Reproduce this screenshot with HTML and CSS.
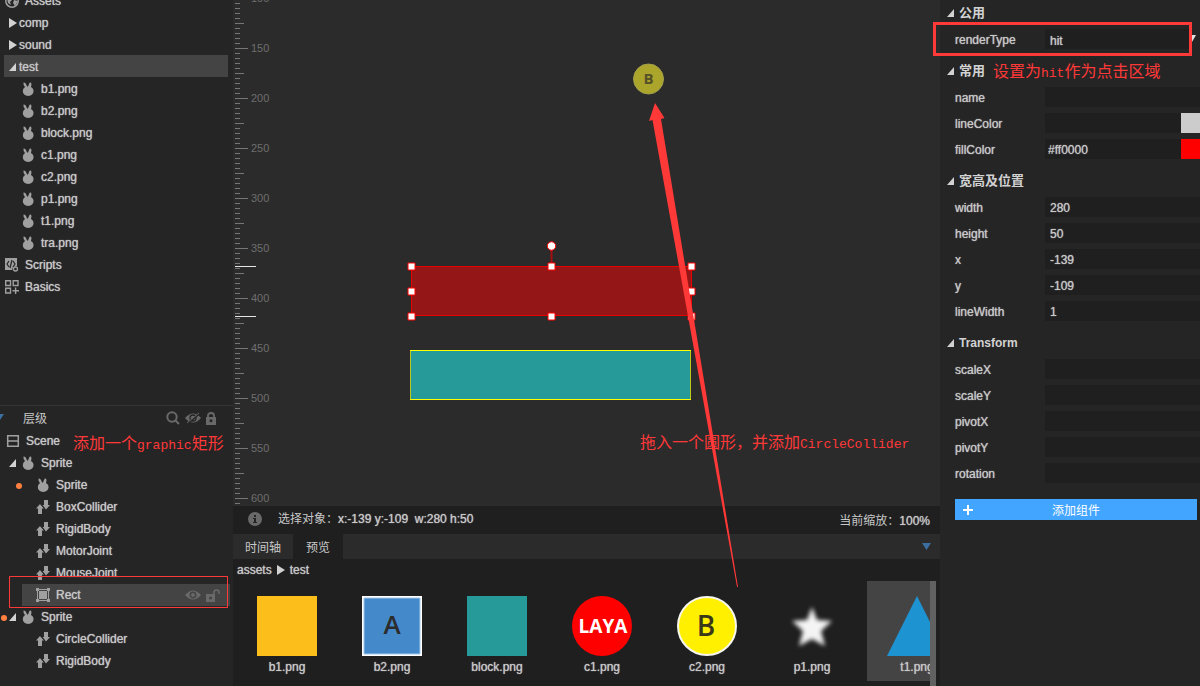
FILE: index.html
```html
<!DOCTYPE html>
<html lang="zh-CN">
<head>
<meta charset="utf-8">
<title>test</title>
<link rel="stylesheet" href="styles.css">
</head>
<body>
<svg class="defs" aria-hidden="true">
  <symbol id="bunny" viewBox="0 0 14 14"><path d="M2.500.500Q4 0 5 2L6 4.500H7L8 2Q8.800.300 10 .600 11 2 10 5Q12.700 6.700 12.600 9 12.300 13.800 7.200 13.900 2 13.800 1.800 9 1.800 6.500 4 5 2 2.500 2.500.500Z" fill="#a0a0a0"/></symbol>
  <symbol id="joint" viewBox="0 0 14 14"><path d="M4 4L8 8.500H6V14H2V8.500H0ZM8 0H12V5H14L10 9.500 6.500 5H8Z" fill="#a0a0a0"/><path d="M4 3L8.500 8.500" stroke="#252525"/></symbol>
  <symbol id="closed" viewBox="0 0 8 10"><path d="M0 0L8 5 0 10Z" fill="#d2d2d2"/></symbol>
  <symbol id="open" viewBox="0 0 8 10"><path d="M7 1V9H0Z" fill="#d2d2d2"/></symbol>
</svg>
<div class="app">
  <aside class="side">
    <section class="assets">
      <ul class="tree">
        <li class="row root"><svg class="ico" viewBox="0 0 14 14"><circle cx="7" cy="7" r="6.200" fill="none" stroke="#a0a0a0" stroke-width="1.500"/><path d="M2 4L7 2 8 5 5 8 6 11 3 9ZM9 6L13 7 10 12 8 9Z" fill="#a0a0a0"/></svg>Assets</li>
        <li class="row"><svg class="arrow"><use href="#closed"/></svg>comp</li>
        <li class="row"><svg class="arrow"><use href="#closed"/></svg>sound</li>
        <li class="row picked"><svg class="arrow"><use href="#open"/></svg>test</li>
        <li class="row file"><svg class="ico"><use href="#bunny"/></svg>b1.png</li>
        <li class="row file"><svg class="ico"><use href="#bunny"/></svg>b2.png</li>
        <li class="row file"><svg class="ico"><use href="#bunny"/></svg>block.png</li>
        <li class="row file"><svg class="ico"><use href="#bunny"/></svg>c1.png</li>
        <li class="row file"><svg class="ico"><use href="#bunny"/></svg>c2.png</li>
        <li class="row file"><svg class="ico"><use href="#bunny"/></svg>p1.png</li>
        <li class="row file"><svg class="ico"><use href="#bunny"/></svg>t1.png</li>
        <li class="row file"><svg class="ico"><use href="#bunny"/></svg>tra.png</li>
        <li class="row root"><svg class="ico" viewBox="0 0 14 14"><path d="M0 0H12V8L8 9 7 12H0Z" fill="#a0a0a0"/><path d="M4 3L2 6 4 9M8 3L10 6 8 9M7 2L5 10" fill="none" stroke="#252525" stroke-width="1.200"/><circle cx="10.500" cy="11" r="2" fill="none" stroke="#a0a0a0" stroke-width="1.300"/></svg>Scripts</li>
        <li class="row root"><svg class="ico" viewBox="0 0 14 14"><path d="M.700.700H5.500V5.500H.700ZM8.200.700H13V5.500H8.200ZM.700 8.200H5.500V13H.700ZM10.600 7.500V14M7.500 10.700H14" fill="none" stroke="#a0a0a0" stroke-width="1.400"/></svg>Basics</li>
      </ul>
    </section>
    <section class="layers">
      <header class="layers-head">
        <svg class="fold" viewBox="0 0 4 8"><path d="M0 0H4L0 6Z" fill="#3c6e9f"/></svg>
        <h2>层级</h2>
        <div class="tools">
          <button aria-label="搜索"><svg width="14" height="14" viewBox="0 0 14 14"><circle cx="6" cy="6" r="4.700" fill="none" stroke="#696969" stroke-width="2"/><path d="M9.500 9.500L13 13" stroke="#696969" stroke-width="2"/></svg></button>
          <button aria-label="隐藏"><svg width="16" height="12" viewBox="0 0 16 12"><path d="M0 6Q8-3 16 6 8 15 0 6Z" fill="#696969"/><circle cx="8" cy="6" r="3" fill="none" stroke="#252525" stroke-width="1.300"/><path d="M2 12L15 1" stroke="#252525" stroke-width="2"/><path d="M2 11L14 1" stroke="#696969"/></svg></button>
          <button aria-label="锁定"><svg width="10" height="13" viewBox="0 0 10 13"><path d="M2 6V3.500Q2 1 5 1 8 1 8 3.500V6" fill="none" stroke="#696969" stroke-width="1.800"/><path d="M0 5H10V13H0Z" fill="#696969"/><circle cx="5" cy="8.800" r="1.500" fill="#252525"/></svg></button>
        </div>
      </header>
      <ul class="tree">
        <li class="row scene"><svg class="ico" viewBox="0 0 14 14"><path d="M1.700 1.700H12.300V12.300H1.700ZM1.700 7H12.300" fill="none" stroke="#a0a0a0" stroke-width="1.500"/></svg>Scene</li>
        <li class="row sprite"><svg class="arrow"><use href="#open"/></svg><svg class="ico"><use href="#bunny"/></svg>Sprite</li>
        <li class="row child"><i class="dot inner"></i><svg class="ico"><use href="#bunny"/></svg>Sprite</li>
        <li class="row child"><svg class="ico"><use href="#joint"/></svg>BoxCollider</li>
        <li class="row child"><svg class="ico"><use href="#joint"/></svg>RigidBody</li>
        <li class="row child"><svg class="ico"><use href="#joint"/></svg>MotorJoint</li>
        <li class="row child"><svg class="ico"><use href="#joint"/></svg>MouseJoint</li>
        <li class="row rect"><svg class="ico" viewBox="0 0 14 14"><path d="M1.500 1.500H12.500V12.500H1.500Z" fill="none" stroke="#a0a0a0"/><path d="M0 0H3V3H0ZM11 0H14V3H11ZM0 11H3V14H0ZM11 11H14V14H11ZM3 3H11V11H3Z" fill="#a0a0a0"/></svg>Rect
          <span class="tools">
            <button aria-label="显示"><svg width="16" height="10" viewBox="0 0 16 10"><path d="M0 5Q8-4 16 5 8 14 0 5Z" fill="#696969"/><circle cx="8" cy="5" r="2.700" fill="#696969" stroke="#444" stroke-width="1.500"/></svg></button>
            <button aria-label="解锁"><svg width="14" height="13" viewBox="0 0 14 13"><path d="M8 6V3.500Q8 1 10.500 1 13 1 13 3.500V5" fill="none" stroke="#696969" stroke-width="1.500"/><path d="M0 5H9V13H0Z" fill="#696969"/><circle cx="4.500" cy="9" r="1.500" fill="#444"/></svg></button>
          </span></li>
        <li class="row sprite"><i class="dot outer"></i><svg class="arrow"><use href="#open"/></svg><svg class="ico"><use href="#bunny"/></svg>Sprite</li>
        <li class="row child"><svg class="ico"><use href="#joint"/></svg>CircleCollider</li>
        <li class="row child"><svg class="ico"><use href="#joint"/></svg>RigidBody</li>
      </ul>
    </section>
  </aside>

  <main class="main">
    <section class="stage">
      <svg class="ticks" aria-hidden="true">
        <defs><pattern id="scale" width="24" height="50" patternUnits="userSpaceOnUse">
          <path d="M0 3.500H5M0 8.500H5M0 13.500H5M0 18.500H5M0 23.500H9M0 28.500H5M0 33.500H5M0 38.500H5M0 43.500H5M0 48.500H13" stroke="#777"/>
        </pattern></defs>
        <rect width="24" height="100%" fill="url(#scale)"/>
        <path d="M0 266.500H21M0 316.500H21" stroke="#e4e8e4"/>
      </svg>
      <ol class="marks"><li>100</li><li>150</li><li>200</li><li>250</li><li>300</li><li>350</li><li>400</li><li>450</li><li>500</li><li>550</li><li>600</li></ol>
      <svg class="scene-art" width="707" height="506" viewBox="233 0 707 506">
        <circle cx="648.500" cy="79" r="15" fill="#aca52b" stroke="#a3a04b"/>
        <text x="648.500" y="84" class="ball">B</text>
        <rect x="411.500" y="266.500" width="280" height="49" fill="#951616" stroke="#e80000"/>
        <path d="M551.500 248V266" stroke="#a50e10" stroke-width="2"/>
        <circle cx="551.500" cy="246" r="4.200" fill="#fff" stroke="#f00"/>
        <path d="M408 263h7v7h-7zM548 263h7v7h-7zM688 263h7v7h-7zM408 288h7v7h-7zM688 288h7v7h-7zM408 313h7v7h-7zM548 313h7v7h-7zM688 313h7v7h-7z" fill="#fff" stroke="#f00"/>
        <rect x="410.500" y="350.500" width="280" height="49" fill="#269a99" stroke="#bcc719"/>
        <path d="M410 350.500H691M410 399.500H691" stroke="#ff0"/>
      </svg>
    </section>
    <div class="status">
      <svg width="14" height="14" viewBox="0 0 14 14"><circle cx="7" cy="7" r="7" fill="#696969"/><path d="M6 3H8V5H6ZM5 6H8V10H9V11H5V10H6V7H5Z" fill="#252525"/></svg>
      <span>选择对象：<b>x:-139 y:-109&nbsp; w:280 h:50</b></span>
      <span class="zoom">当前缩放：<b>100%</b></span>
    </div>
    <div class="tabs">
      <button>时间轴</button><button class="current">预览</button>
      <svg class="drop" width="10" height="8" viewBox="0 0 10 8"><path d="M0 0H9L4.500 7Z" fill="#3c6e9f"/></svg>
    </div>
    <section class="preview">
      <nav class="crumbs">assets<svg><use href="#closed"/></svg>test</nav>
      <div class="shelf">
        <div class="items">
          <figure><svg viewBox="0 0 60 60"><path d="M0 0H60V60H0Z" fill="#fcbe1a"/></svg><figcaption>b1.png</figcaption></figure>
          <figure><svg viewBox="0 0 60 60"><path d="M0 0H60V60H0Z" fill="#fff"/><path d="M2 2H58V58H2Z" fill="#4489ca" stroke="#a5c8e8"/><text x="30" y="38" class="letter">A</text></svg><figcaption>b2.png</figcaption></figure>
          <figure><svg viewBox="0 0 60 60"><path d="M0 0H60V60H0Z" fill="#269a99"/></svg><figcaption>block.png</figcaption></figure>
          <figure><svg viewBox="0 0 60 60"><circle cx="30" cy="30" r="30" fill="#f00"/><text x="31" y="37" class="laya">LAYA</text></svg><figcaption>c1.png</figcaption></figure>
          <figure><svg viewBox="0 0 60 60"><circle cx="30" cy="30" r="29" fill="#fff000" stroke="#f6f6ef" stroke-width="2"/><text x="29" y="40" class="letter big">B</text></svg><figcaption>c2.png</figcaption></figure>
          <figure><svg viewBox="0 0 60 60"><path class="soft" d="M30 11L35 24 50 25 39 35 43 50 30 43 17 50 21 35 10 25 25 24Z" fill="#f4f4f4"/></svg><figcaption>p1.png</figcaption></figure>
          <figure class="on"><svg viewBox="0 0 60 60"><path d="M30 0L60 60H0Z" fill="#1e93d2"/></svg><figcaption>t1.png</figcaption></figure>
        </div>
        <div class="thumb"></div>
      </div>
    </section>
  </main>

  <aside class="props">
    <form>
      <h3><svg><use href="#open"/></svg>公用</h3>
      <div class="field"><label for="renderType">renderType</label><select id="renderType"><option>hit</option></select><svg class="caret" viewBox="0 0 10 8"><path d="M0 0H6L2 7H0Z" fill="#e0e0e0"/></svg></div>
      <h3><svg><use href="#open"/></svg>常用</h3>
      <div class="field"><label for="name">name</label><input id="name"></div>
      <div class="field"><label for="lineColor">lineColor</label><input id="lineColor"><i class="swatch grey"></i></div>
      <div class="field"><label for="fillColor">fillColor</label><input id="fillColor" class="tight" value="#ff0000"><i class="swatch red"></i></div>
      <h3><svg><use href="#open"/></svg>宽高及位置</h3>
      <div class="field"><label for="width">width</label><input id="width" value="280"></div>
      <div class="field"><label for="height">height</label><input id="height" value="50"></div>
      <div class="field"><label for="x">x</label><input id="x" value="-139"></div>
      <div class="field"><label for="y">y</label><input id="y" value="-109"></div>
      <div class="field"><label for="lineWidth">lineWidth</label><input id="lineWidth" value="1"></div>
      <h3 class="latin"><svg><use href="#open"/></svg>Transform</h3>
      <div class="field"><label for="scaleX">scaleX</label><input id="scaleX"></div>
      <div class="field"><label for="scaleY">scaleY</label><input id="scaleY"></div>
      <div class="field"><label for="pivotX">pivotX</label><input id="pivotX"></div>
      <div class="field"><label for="pivotY">pivotY</label><input id="pivotY"></div>
      <div class="field"><label for="rotation">rotation</label><input id="rotation"></div>
      <button type="button" class="add"><svg width="10" height="10" viewBox="0 0 10 10"><path d="M5 0V10M0 5H10" stroke="#fff" stroke-width="2"/></svg><span>添加组件</span></button>
    </form>
  </aside>
</div>

<svg class="pointer" width="1200" height="686" aria-hidden="true"><path d="M655 103L664.500 118 661 119 738 587H737L652.500 120 649 121Z" fill="#ff3838"/></svg>
<div class="frame frame-rect"></div>
<div class="frame frame-type"></div>
<p class="note note-rect">添加一个<span>graphic</span>矩形</p>
<p class="note note-circle">拖入一个圆形，并添加<span>CircleCollider</span></p>
<p class="note note-hit">设置为<span>hit</span>作为点击区域</p>
</body>
</html>
```

FILE: styles.css
```css
* { box-sizing: border-box; }
body {
  margin: 0;
  overflow: hidden;
  background: #252525;
  color: #c8c8c8;
  font: 12px/22px "Liberation Sans", "Noto Sans CJK SC", sans-serif;
}
ul, ol, h2, h3, p, figure { margin: 0; padding: 0; list-style: none; font-size: 12px; font-weight: 400; }
button, input, select { border: 0; border-radius: 0; background: none; color: inherit; font: inherit; padding: 0; outline: 0; }
svg { display: block; flex: none; }
.defs { position: absolute; width: 0; height: 0; }

.app { display: grid; grid-template-columns: 233px 1fr 260px; height: 100vh; }
.row, .crumbs, figcaption, .field, .status b { text-shadow: 0 0 1px #c8c8c8; }

.side { display: flex; flex-direction: column; min-height: 0; }
.assets { flex: 1; overflow: hidden; border-bottom: 1px solid #333; }
.assets .tree { margin-top: -11px; }
.row { display: flex; align-items: center; height: 22px; margin: 0 5px 0 4px; padding-left: 5px; position: relative; }
.assets .row { padding-top: 2px; }
.arrow { width: 8px; height: 10px; margin-right: 2px; }
.ico { width: 14px; height: 14px; margin-right: 6px; }
.root { padding-left: 1px; }
.picked { background: #444; }
.file { padding-left: 17px; }
.scene { padding-left: 2px; }
.sprite .arrow { margin-right: 4px; }
.child { padding-left: 32px; }
.rect { margin: 0 3px 0 22px; padding-left: 14px; background: #444; }
.dot { position: absolute; width: 6px; height: 6px; border-radius: 50%; background: #ff7f41; top: 9px; }
.inner { left: 12px; }
.outer { left: -3px; }

.layers { padding-bottom: 14px; }
.layers-head { display: flex; align-items: center; height: 24px; }
.layers-head h2 { margin-left: 19px; padding-top: 2px; }
.fold { width: 4px; height: 8px; }
.tools { display: flex; align-items: center; gap: 5px; margin-left: auto; }
.layers-head .tools { margin-right: 17px; }
.rect .tools { margin-right: 10px; }

.main { display: flex; flex-direction: column; min-width: 0; min-height: 0; background: #1f1f1f; }
.stage { flex: 1; display: flex; position: relative; min-height: 0; overflow: hidden; background: #2b2b2b; padding-left: 2px; }
.ticks { position: absolute; width: 24px; height: 100%; }
.marks { margin: -27px 0 0 16px; color: #6e6e6e; font-size: 11px; }
.marks li { height: 50px; line-height: 50px; }
.scene-art { position: absolute; left: 0; top: 0; }
.ball { font: 700 15px "Open Sans", sans-serif; fill: #555129; text-anchor: middle; }
.status { display: flex; align-items: center; height: 28px; padding: 0 10px 2px 15px; gap: 16px; }
.status b { font-weight: 400; }
.zoom { margin-left: auto; padding-top: 3px; }
.tabs { display: flex; height: 25px; background: #2b2b2b; align-items: stretch; }
.tabs button { padding: 3px 12px 0; }
.tabs .current { padding: 3px 13px 0; background: #1f1f1f; }
.drop { margin: 9px 8px 0 auto; }
.preview { height: 127px; display: flex; flex-direction: column; }
.crumbs { display: flex; align-items: center; gap: 5px; padding-left: 4px; height: 22px; }
.crumbs svg { width: 8px; height: 10px; }
.shelf { display: flex; flex: 1; padding: 0 4px; }
.items { display: flex; flex: 1; gap: 5px; min-width: 0; overflow: hidden; }
.thumb { width: 6px; background: #616161; }
figure { flex: none; width: 100px; height: 100px; padding-top: 15px; text-align: center; }
figure svg { width: 60px; height: 60px; margin: 0 auto; }
.on { background: #444; }
.letter { font: 600 26px "Open Sans", sans-serif; fill: #2c2c2c; text-anchor: middle; }
.big { font-size: 28px; fill: #3a3818; }
.laya { font: 700 19px "Open Sans", sans-serif; fill: #fff; text-anchor: middle; }
.soft { filter: blur(2px); }

.props { overflow: hidden; padding-left: 7px; }
.props form { margin-top: -9px; }
h3 { display: flex; align-items: center; height: 38px; padding-top: 5px; gap: 4px; font-size: 13px; font-weight: 700; color: #d2d2d2; }
.latin { font-size: 12px; }
h3 svg { width: 8px; height: 10px; }
.field { display: flex; align-items: center; height: 20px; padding-left: 8px; }
.field + .field { margin-top: 6px; }
.field label { width: 90px; padding-top: 2px; }
.field input, .field select { flex: 1; min-width: 0; height: 20px; padding: 1px 0 0 5px; background: #1f1f1f; appearance: none; text-shadow: inherit; }
.field .tight { padding-left: 3px; }
.caret { width: 10px; height: 8px; }
.swatch { width: 19px; height: 20px; }
.grey { background: #ccc; }
.red { background: #f00; }
.add { display: flex; align-items: center; width: calc(100% - 11px); height: 21px; margin: 16px 3px 0 8px; padding: 0 8px; background: #42a5ff; color: #fff; }
.add span { flex: 1; padding: 3px 10px 0 0; }

.pointer { position: absolute; left: 0; top: 0; pointer-events: none; }
.frame { position: absolute; border: 1px solid #ff3838; pointer-events: none; }
.frame-rect { left: 9px; top: 576px; width: 219px; height: 32px; }
.frame-type { left: 933px; top: 22px; width: 259px; height: 34px; border-width: 3px; }
.note { position: absolute; color: #ff3838; font-size: 16px; font-weight: 400; font-family: "Noto Sans CJK SC", sans-serif; white-space: nowrap; }
.note span { font: 13px "Liberation Mono", monospace; }
.note-rect { left: 73px; top: 431px; }
.note-circle { left: 640px; top: 430px; }
.note-hit { left: 993px; top: 59px; }
```
